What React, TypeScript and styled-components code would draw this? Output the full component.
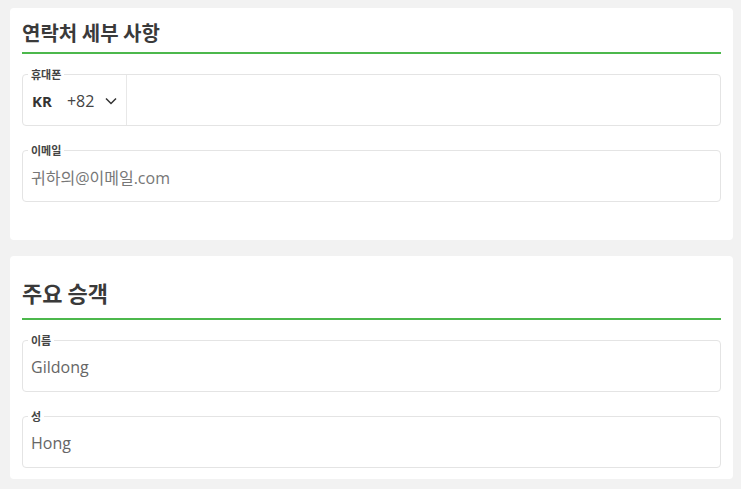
import React from "react";
import styled, { createGlobalStyle } from "styled-components";

const Global = createGlobalStyle`
  html, body { margin: 0; padding: 0; background: #f2f2f2; }
  body { font-family: "Open Sans", "Noto Sans CJK KR", sans-serif; color: #333; }
  * { box-sizing: border-box; }
`;

const Page = styled.div`
  display: flex;
  flex-direction: column;
  gap: 16px;
  padding: 8px 8px 10px 10px;
`;

const Card = styled.section<{ $padBottom: number }>`
  background: #fff;
  border-radius: 4px;
  padding: 0 12px ${(p) => p.$padBottom}px;
`;

const Header = styled.div<{ $top: number; $bottom: number }>`
  padding: ${(p) => p.$top}px 0 ${(p) => p.$bottom}px;
  border-bottom: 2px solid #4cb84c;
  margin-bottom: 20px;
`;

const Title = styled.h2<{ $size: number; $lh: number }>`
  margin: 0;
  font-family: "Noto Sans CJK KR", "Open Sans", sans-serif;
  font-weight: 700;
  font-size: ${(p) => p.$size}px;
  line-height: ${(p) => p.$lh}px;
  color: #3a3a3a;
`;

const Fields = styled.div`
  display: flex;
  flex-direction: column;
  gap: 24px;
`;

const Field = styled.div`
  position: relative;
  height: 52px;
  border: 1px solid #e4e4e4;
  border-radius: 4px;
  display: flex;
  align-items: stretch;
`;

const Label = styled.span`
  position: absolute;
  top: -7px;
  left: 5px;
  padding: 0 3px;
  background: #fff;
  font-family: "Noto Sans CJK KR", sans-serif;
  font-weight: 700;
  font-size: 11px;
  line-height: 12px;
  color: #444;
`;

const Value = styled.div<{ $placeholder?: boolean }>`
  flex: 1;
  display: flex;
  align-items: center;
  padding: 2px 8px 0;
  font-size: 16px;
  color: ${(p) => (p.$placeholder ? "#777" : "#666")};
`;

const Selector = styled.div`
  display: flex;
  align-items: center;
  padding: 2px 9px 0 9px;
  border-right: 1px solid #e8e8e8;
`;

const Country = styled.span`
  font-weight: 700;
  font-size: 15px;
  color: #333;
`;

const Code = styled.span`
  margin-left: 15px;
  font-size: 16px;
  color: #444;
`;

const Chevron = styled.svg`
  margin-left: 11px;
  width: 12px;
  height: 8px;
`;

export default function App() {
  return (
    <>
      <Global />
      <Page>
        <Card $padBottom={38}>
          <Header $top={12} $bottom={6}>
            <Title $size={20} $lh={26}>연락처 세부 사항</Title>
          </Header>
          <Fields>
            <Field>
              <Label>휴대폰</Label>
              <Selector>
                <Country>KR</Country>
                <Code>+82</Code>
                <Chevron viewBox="0 0 12 8">
                  <path d="M1 1.5 L6 6.5 L11 1.5" fill="none" stroke="#333" strokeWidth="1.5" />
                </Chevron>
              </Selector>
            </Field>
            <Field>
              <Label>이메일</Label>
              <Value $placeholder>귀하의@이메일.com</Value>
            </Field>
          </Fields>
        </Card>
        <Card $padBottom={11}>
          <Header $top={21} $bottom={11}>
            <Title $size={22} $lh={30}>주요 승객</Title>
          </Header>
          <Fields>
            <Field>
              <Label>이름</Label>
              <Value>Gildong</Value>
            </Field>
            <Field>
              <Label>성</Label>
              <Value>Hong</Value>
            </Field>
          </Fields>
        </Card>
      </Page>
    </>
  );
}
